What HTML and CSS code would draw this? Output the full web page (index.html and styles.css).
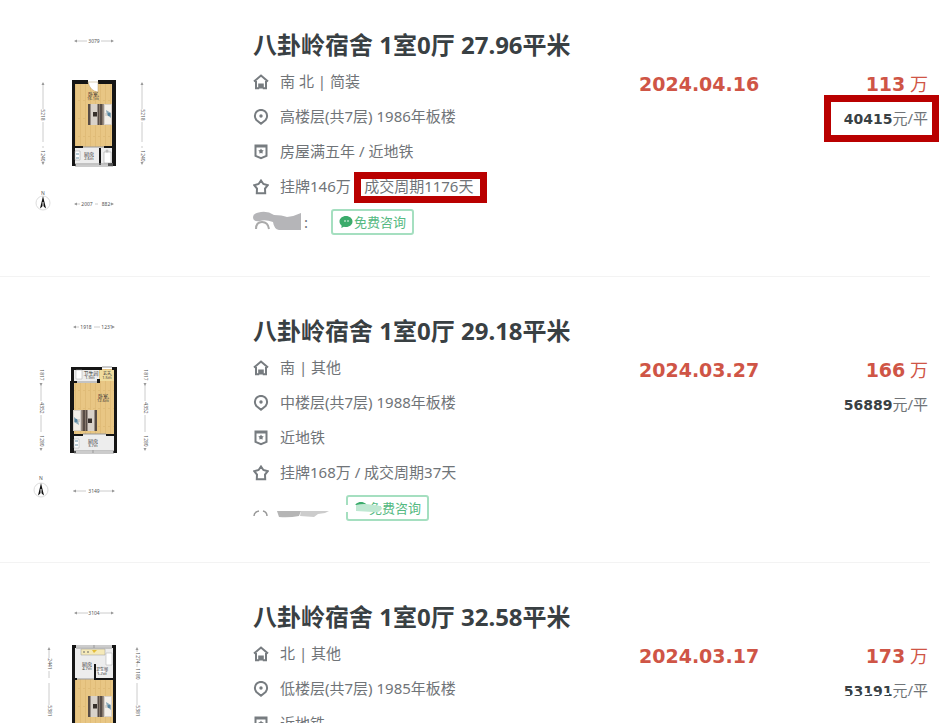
FILE: index.html
```html
<!DOCTYPE html>
<html lang="zh-CN">

<head>
    <meta charset="UTF-8">
    <meta name="viewport" content="width=device-width, initial-scale=1.0">
    <title>成交房源</title>
    <link rel="stylesheet" href="styles.css">
</head>

<body>
    <!-- 公用图标 -->
    <svg class="defs" width="0" height="0" aria-hidden="true">
        <symbol id="house" viewBox="0 0 16 16">
            <path d="M1 7.600 8 1.500l7 6.100M3 7v7.200h3.200M13 7v7.200H9.800M6.200 14.500v-4h3.600v4M8 10.500v4" />
        </symbol>
        <symbol id="pin" viewBox="0 0 16 16">
            <path d="M8 14.700 3.400 11a6.100 6.100 0 1 1 9.200 0z" />
            <circle class="dot" cx="8" cy="7" r="1.700" />
        </symbol>
        <symbol id="badge" viewBox="0 0 16 16">
            <path d="M2.500 1.500h11v10.300L8 14.200l-5.500-2.400zM3 2.500h10" />
            <path class="dot" d="m8 4.500.9 1.600 1.800.4-1.200 1.300.2 1.800L8 8.900l-1.700.7.2-1.800-1.200-1.300 1.800-.4z" />
        </symbol>
        <symbol id="star" viewBox="0 0 16 16">
            <path d="M8 1.500 10.400 5l4.300 1.200L12 9.600l.2 4.600H3.800L4 9.600 1.300 6.200 5.600 5z" />
        </symbol>
        <symbol id="chat" viewBox="0 0 14 14">
            <path d="M7 1C3.400 1 .5 3.400.5 6.500c0 1.700.8 3.200 2.200 4.200L2.300 13l2.600-1.300c.7.2 1.400.3 2.100.3 3.600 0 6.500-2.400 6.500-5.500S10.600 1 7 1z" fill="#3bab6b" />
            <circle cx="6" cy="6" r=".8" fill="#fff" />
            <circle cx="9" cy="6" r=".8" fill="#fff" />
        </symbol>
        <symbol id="bed" viewBox="0 0 24 22">
            <path fill="#574c46" d="M0 0h17v21H0z" />
            <path fill="#d9d2ca" d="M2.500 0h7v21h-7zM15.500 0H24v21h-8.500z" />
            <path fill="#86786c" d="M11 0h1v21h-1zM14 0h1v21h-1z" />
            <path fill="#37302c" d="M5 8h4v4.500H5z" />
            <path fill="#f4efe8" d="M17 1h6v8h-6zM17 12h6v8h-6z" />
            <path fill="#8da9b8" d="m18 6 5 3v5l-4-3z" />
            <path fill="#57849f" d="M20 9h2v3h-2z" />
        </symbol>
        <symbol id="compass" viewBox="0 0 16 16">
            <circle cx="8" cy="8" r="7" fill="#fff" stroke="#ddd" />
            <path fill="#111" d="m8 1 3 12.500-3-2.500-3 2.500z" />
            <path stroke="#fff" d="M8 7v5" />
        </symbol>
        <pattern id="wood" width="5" height="18" patternUnits="userSpaceOnUse">
            <path fill="#e8c684" d="M0 0h5v18H0z" />
            <path fill="#e0bc78" d="M0 0h1v18H0zM3 8h2v1H3z" />
        </pattern>
    </svg>

    <ul class="list">
        <li class="item">
            <svg class="plan" viewBox="0 5 150 200" role="img" aria-label="户型图">
                <g class="ruler">
                    <path d="M55 21h12M81 21h12M23 63v26M23 102v20M23 126v2M122 63v26M122 102v20M122 126v2M55 184h5M75 184h3M90 184h3" />
                    <path class="tip" d="m54 21 3-1.500v3zM94 21l-3-1.500v3zM23 62l-1.500 3h3zM23 145l-1.500-3h3zM122 62l-1.500 3h3zM122 145l-1.500-3h3zM54 184l3-1.500v3zM94 184l-3-1.500v3z" />
                    <text x="74" y="23">3079</text>
                    <text x="67" y="186">2007</text>
                    <text x="86" y="186">882</text>
                    <text transform="translate(21 95) rotate(90)">5218</text>
                    <text transform="translate(21 136) rotate(90)">1240</text>
                    <text transform="translate(121 95) rotate(90)">5218</text>
                    <text transform="translate(121 136) rotate(90)">1240</text>
                </g>
                <path fill="#ededed" d="M54 127h40v18H54z" />
                <path fill="url(#wood)" d="M54 62h40v65H54z" />
                <path fill="#151515" d="M52 60h16v4H55v80h1v2h-4zM78 60h18v86h-4V64H78zM55 126h8v2h-8zM84 126h10v2H84zM79 128h2v17h-2zM88 143h4v3h-4z" />
                <path class="line" d="M55 144h38M55 146h38M63 127h21M68 63h10" />
                <path fill="#fff" stroke="#b79d6c" stroke-width=".500" d="M68 62h10v10q-8-1-10-10" />
                <use href="#bed" x="68" y="84" width="24" height="22" />
                <path fill="#fff" stroke="#999" stroke-width=".500" d="M84 132h7v11h-7zM55 131h5v9h-5z" />
                <circle cx="87" cy="131" r="1.500" fill="#bbb" />
                <path stroke="#7095a8" fill="none" d="M56 134h3M56 138h3" />
                <text class="room" x="73" y="76">卧室</text>
                <text class="room small" x="73" y="80">16.1㎡</text>
                <text class="room" x="69" y="136">厨房</text>
                <text class="room small" x="69" y="140">2.6㎡</text>
                <text class="north" x="23" y="175">N</text>
                <use href="#compass" x="15" y="175" width="16" height="16" />
            </svg>
            <div class="info">
                <h2>八卦岭宿舍 1室0厅 27.96平米</h2>
                <p><svg class="icon"><use href="#house" /></svg>南 北 | 简装</p>
                <p><svg class="icon"><use href="#pin" /></svg>高楼层(共7层) 1986年板楼</p>
                <p><svg class="icon"><use href="#badge" /></svg>房屋满五年 / 近地铁</p>
                <p><svg class="icon"><use href="#star" /></svg>挂牌146万 /&nbsp;<span class="marked">成交周期1176天</span></p>
                <div class="agent">
                    <svg class="smudge" width="50" height="24" viewBox="0 0 50 24">
                        <path fill="#b5b5b8" d="M0 7q0-4 8-5 7-1 13 3 8 0 13 2 8-1 14-4v17H26q-5-1-6-8-8-3-13-1-7 1-7-4z" />
                        <path fill="none" stroke="#aaa" stroke-width="2" d="M3 19q0-7 6-7 6 0 7 7" />
                    </svg>
                    <span class="colon">:</span>
                    <button type="button"><svg width="14" height="14"><use href="#chat" /></svg>免费咨询</button>
                </div>
            </div>
            <div class="date">2024.04.16</div>
            <div class="price">
                <div class="total"><b>113</b> 万</div>
                <div class="unit marked"><b>40415</b>元/平</div>
            </div>
        </li>

        <li class="item">
            <svg class="plan" viewBox="0 1 150 200" role="img" aria-label="户型图">
                <g class="ruler">
                    <path d="M54 17h5M74 17h6M92 17h2M21 73v18M21 105v17M125 73v18M125 105v17M53 181h13M80 181h14" />
                    <path class="tip" d="m53 17 3-1.500v3zM95 17l-3-1.500v3zM21 76l-1.500-3h3zM21 141l-1.500-3h3zM125 76l-1.500-3h3zM125 141l-1.500-3h3zM53 181l3-1.500v3zM95 181l-3-1.500v3z" />
                    <text x="66" y="19">1918</text>
                    <text x="87" y="19">1231</text>
                    <text x="74" y="183">3149</text>
                    <text transform="translate(20 65) rotate(90)">1817</text>
                    <text transform="translate(20 98) rotate(90)">4352</text>
                    <text transform="translate(20 131) rotate(90)">1280</text>
                    <text transform="translate(124 65) rotate(90)">1817</text>
                    <text transform="translate(124 98) rotate(90)">4352</text>
                    <text transform="translate(124 131) rotate(90)">1280</text>
                </g>
                <path fill="#ededed" d="M53 59h42v82H53z" />
                <path fill="url(#wood)" d="M53 73h41v51H53zM79 59h15v14H79z" />
                <path fill="#efdc9e" d="M80 60h14v11H80z" />
                <path fill="#151515" d="M51 57h31v3H54v11h3v2h-3v68h2v2h-6V71h1zM92 57h5v86h-4v-2h1V60h-2zM77 69h3v4h-3zM54 124h9v2h-9zM86 124h9v2h-9z" />
                <path class="line" d="M57 72h20M63 124h23M54 141h40M54 143h40M82 57h10M73 140v3" />
                <path fill="#fff" stroke="#aaa" stroke-width=".500" d="M56 60h6v9h-6zM54 129h5v9h-5z" />
                <path stroke="#7095a8" fill="none" d="M55 131h3M55 135h3" />
                <use href="#bed" transform="rotate(180 66 110)" x="55" y="99" width="24" height="22" />
                <text class="room" x="71" y="65">卫生间</text>
                <text class="room small" x="70" y="69">1.9㎡</text>
                <text class="room small" x="87" y="65">玄关</text>
                <text class="room small" x="87" y="69">1.5㎡</text>
                <text class="room" x="83" y="88">卧室</text>
                <text class="room small" x="83" y="92">12.6㎡</text>
                <text class="room" x="73" y="133">厨房</text>
                <text class="room small" x="73" y="137">3.7㎡</text>
                <text class="north" x="21" y="170">N</text>
                <use href="#compass" x="13" y="172" width="16" height="16" />
            </svg>
            <div class="info">
                <h2>八卦岭宿舍 1室0厅 29.18平米</h2>
                <p><svg class="icon"><use href="#house" /></svg>南 | 其他</p>
                <p><svg class="icon"><use href="#pin" /></svg>中楼层(共7层) 1988年板楼</p>
                <p><svg class="icon"><use href="#badge" /></svg>近地铁</p>
                <p><svg class="icon"><use href="#star" /></svg>挂牌168万 / 成交周期37天</p>
                <div class="agent">
                    <svg class="smudge wide" width="76" height="24" viewBox="0 0 76 24">
                        <path fill="none" stroke="#999" stroke-width="1.500" d="M1 20q0-4 5-5M10 15q4 1 4 5" />
                        <path fill="#b5b5b5" d="M24 15h24l-2 5q-10 2-20 1z" />
                        <path fill="#ccc" d="M48 15h28l-4 2-7 1-4 3-14-1z" />
                    </svg>
                    <button type="button"><svg width="14" height="14"><use href="#chat" /></svg>免费咨询<svg class="smear" width="38" height="16" viewBox="0 0 38 16">
                            <path fill="#fff" d="M0 5h10v7H0zM9 5h15v9H9z" />
                            <path fill="#bfe8d2" d="M10 5q8-2 17 0 8 0 9 3-1 5-9 4l-17-1z" />
                        </svg></button>
                </div>
            </div>
            <div class="date">2024.03.27</div>
            <div class="price">
                <div class="total"><b>166</b> 万</div>
                <div class="unit"><b>56889</b>元/平</div>
            </div>
        </li>

        <li class="item">
            <svg class="plan" viewBox="0 7 150 200" role="img" aria-label="户型图">
                <g class="ruler">
                    <path d="M55 23h13M80 23h13M29 59v9M29 81v7M29 93v22M117 59v3M117 74v3M117 93v22" />
                    <path class="tip" d="m54 23 3-1.500v3zM94 23l-3-1.500v3zM29 57l-1.500 3h3zM117 57l-1.500 3h3z" />
                    <text x="74" y="25">3104</text>
                    <text transform="translate(28 74) rotate(90)">2441</text>
                    <text transform="translate(28 121) rotate(90)">5381</text>
                    <text transform="translate(116 68) rotate(90)">1274</text>
                    <text transform="translate(116 84) rotate(90)">1180</text>
                    <text transform="translate(116 121) rotate(90)">5381</text>
                </g>
                <path fill="#ededed" d="M54 57h40v32H54z" />
                <path fill="url(#wood)" d="M54 89h40v55H54z" />
                <path fill="#151515" d="M52 55h4v3h-1v86h-3zM92 55h4v89h-3V58h-1zM74 74h2v14h18v2H74zM54 88h3v2h-3z" />
                <path class="line" d="M56 56h36M56 58h36M57 89h17M74 55v3" />
                <path fill="#f5e9b8" stroke="#999" stroke-width=".500" d="M61 59h24v6H61z" />
                <path fill="#e3bd37" d="m72 60 2 3 3-3z" />
                <path stroke="#666" d="M63 62h2M67 62h2" />
                <path fill="#fff" stroke="#aaa" stroke-width=".500" d="M86 63h6v12h-6zM78 78h8v6h-8z" />
                <text class="room" x="67" y="76">厨房</text>
                <text class="room small" x="67" y="80">4.7㎡</text>
                <text class="room small" x="82" y="81">卫生间</text>
                <text class="room small" x="82" y="85">1.7㎡</text>
                <use href="#bed" x="68" y="106" width="24" height="22" />
            </svg>
            <div class="info">
                <h2>八卦岭宿舍 1室0厅 32.58平米</h2>
                <p><svg class="icon"><use href="#house" /></svg>北 | 其他</p>
                <p><svg class="icon"><use href="#pin" /></svg>低楼层(共7层) 1985年板楼</p>
                <p><svg class="icon"><use href="#badge" /></svg>近地铁</p>
            </div>
            <div class="date">2024.03.17</div>
            <div class="price">
                <div class="total"><b>173</b> 万</div>
                <div class="unit scratched"><b>53191</b>元/平</div>
            </div>
        </li>
    </ul>
</body>

</html>
```
FILE: styles.css
```css
* {
    box-sizing: border-box;
}

body {
    margin: 0;
    height: 100vh;
    overflow: hidden;
    background: #fff;
    color: #707478;
    font: 15px "Noto Sans", "Noto Sans CJK SC", sans-serif;
}

.defs {
    position: absolute;
}

.list {
    margin: -9px 17px 0 0;
    padding: 0;
    list-style: none;
}

.item {
    display: flex;
    padding: 34px 2px 37px 20px;
    border-bottom: 1px solid #f3f3f3;
}

.plan {
    width: 150px;
    height: 200px;
    flex: none;
}

.info {
    flex: 1;
    margin-left: 83px;
}

.info h2 {
    margin: 0;
    color: #394043;
    font-size: 24px;
    font-weight: bold;
    line-height: 39px;
    white-space: nowrap;
}

.info p {
    display: flex;
    align-items: center;
    margin: 0;
    line-height: 35px;
    white-space: nowrap;
}

.icon {
    width: 16px;
    height: 16px;
    margin-right: 11px;
    fill: none;
    stroke: #777c80;
    stroke-width: 2px;
}

.dot {
    fill: #777c80;
    stroke: none;
}

.agent {
    display: flex;
    align-items: center;
    height: 35px;
}

.colon {
    width: 28px;
    padding-left: 1px;
}

.smudge.wide {
    margin-right: 17px;
}

button {
    position: relative;
    display: flex;
    align-items: center;
    gap: 1px;
    height: 26px;
    padding: 0 6px;
    border: 2px solid #a5dfc0;
    border-radius: 3px;
    background: #fff;
    color: #55b982;
    font: 13px "Noto Sans", "Noto Sans CJK SC", sans-serif;
}

.smear {
    position: absolute;
    left: -2px;
    top: 3px;
}

.date {
    width: 214px;
    padding-top: 44px;
    color: #cf5546;
    font: bold 19px/30px "DejaVu Sans", sans-serif;
}

.price {
    width: 75px;
    padding-top: 44px;
    text-align: right;
    white-space: nowrap;
}

.total {
    color: #cf5546;
    font-size: 18px;
    line-height: 30px;
}

.total b {
    font-family: "DejaVu Sans", sans-serif;
    font-size: 19px;
}

.unit {
    float: right;
    line-height: 39px;
}

.unit b {
    color: #394043;
    font-family: "DejaVu Sans", sans-serif;
    font-size: 14px;
}

/* 红框标注 */
.marked {
    position: relative;
}

.marked::after {
    content: '';
    position: absolute;
    inset: 3px -14px 1px -10px;
    border: 7px solid #b90000;
}

.unit.marked::after {
    inset: -4px -11px -3px -20px;
}

/* 数字下方的划痕 */
.scratched {
    position: relative;
}

.scratched::after {
    content: '';
    position: absolute;
    left: 0;
    right: 0;
    top: 22px;
    border-top: 2px dashed #fff;
}

/* 户型图 */
.ruler path {
    stroke: #ccc;
    stroke-width: 1px;
}

.ruler .tip {
    fill: #999;
    stroke: none;
}

.ruler text,
.north,
.room {
    fill: #555;
    font-size: 5px;
    text-anchor: middle;
}

.room {
    fill: #333;
}

.room.small {
    font-size: 4px;
}

.line {
    fill: none;
    stroke: #999;
    stroke-width: 1px;
}
```
